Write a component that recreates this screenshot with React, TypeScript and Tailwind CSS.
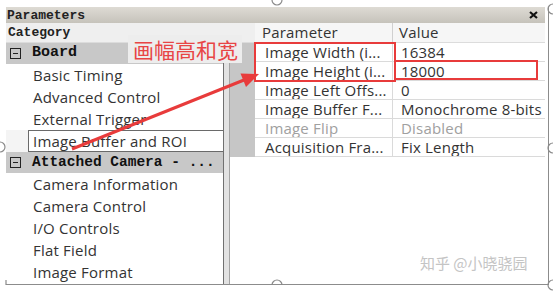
import React from "react";

const treeBoard = ["Basic Timing", "Advanced Control", "External Trigger"];
const treeCamera = ["Camera Information", "Camera Control", "I/O Controls", "Flat Field", "Image Format"];

const params: { name: string; value: string; disabled?: boolean }[] = [
  { name: "Image Width (i...", value: "16384" },
  { name: "Image Height (i...", value: "18000" },
  { name: "Image Left Offs...", value: "0" },
  { name: "Image Buffer F...", value: "Monochrome 8-bits" },
  { name: "Image Flip", value: "Disabled", disabled: true },
  { name: "Acquisition Fra...", value: "Fix Length" },
];

const mono = "font-['Liberation_Mono',monospace] font-bold";
const sans = "font-['Open_Sans',sans-serif] font-medium text-[15px] tracking-[0.2px]";

const Collapse = () => (
  <span className="w-[11px] h-[11px] border border-[#222] flex items-center justify-center">
    <span className="w-[5px] h-[1px] bg-[#222]" />
  </span>
);

const GroupRow = ({ label, size }: { label: string; size: string }) => (
  <div className="h-[21px] bg-[#c8c8c8] flex items-center pl-[4px] gap-[11px] shrink-0">
    <Collapse />
    <span className={`${mono} ${size} text-[#111] whitespace-nowrap`}>{label}</span>
  </div>
);

const TreeItem = ({ label }: { label: string }) => (
  <div className={`${sans} h-[22px] flex items-center pl-[27px] text-[#333] bg-white`}>{label}</div>
);

export default function App() {
  return (
    <div className="relative w-[559px] h-[295px] bg-white overflow-hidden pl-[6px] pt-[7px]">
      <div className="w-[543px] h-[278px] border-r border-b border-[#8c8c8c] pr-[3px] flex flex-col">
        {/* title bar */}
        <div className="h-[16px] bg-linear-to-b from-[#dedbd4] to-[#c6c3bb] flex items-center justify-between pl-[1px] pr-[7px]">
          <span className={`${mono} text-[13px] leading-none text-[#222]`}>Parameters</span>
          <svg width="9" height="8" viewBox="0 0 9 8">
            <path d="M1 1 L8 7 M8 1 L1 7" stroke="#111" strokeWidth="2.2" />
          </svg>
        </div>

        {/* header */}
        <div className="h-[20px] flex bg-[#efefef] border-b border-[#dcdcdc]">
          <div className={`${mono} w-[249px] pl-[2px] flex items-center text-[13px] text-[#222]`}>Category</div>
          <div className={`${sans} w-[138px] pl-[7px] flex items-center text-[#333] bg-[#f6f6f6] border-r border-[#d0d0d0]`}>Parameter</div>
          <div className={`${sans} flex-1 pl-[6px] flex items-center text-[#333] bg-[#f6f6f6]`}>Value</div>
        </div>

        {/* body */}
        <div className="flex-1 flex">
          <div className="w-[218px] flex flex-col border-r border-[#707070]">
            <GroupRow label="Board" size="text-[15px]" />
            {treeBoard.map((t) => (
              <TreeItem key={t} label={t} />
            ))}
            <div className="h-[22px] bg-[#f4f4f4] pl-[22px]">
              <div className={`${sans} h-full border border-r-0 border-[#6a6a6a] bg-white pl-[4px] flex items-center text-[#333] whitespace-nowrap`}>
                Image Buffer and ROI
              </div>
            </div>
            <GroupRow label="Attached Camera - ..." size="text-[14.5px]" />
            {treeCamera.map((t) => (
              <TreeItem key={t} label={t} />
            ))}
          </div>

          <div className="w-[6px] bg-[#e2e2e2] border-r border-[#a4a4a4]" />

          <div className="flex-1 flex flex-col">
            {params.map((p) => (
              <div key={p.name} className="h-[19px] flex">
                <div className="w-[25px] bg-[#c6c6c6]" />
                <div
                  className={`${sans} w-[138px] pl-[10px] flex items-center whitespace-nowrap overflow-hidden border-r border-b border-[#dadada] ${p.disabled ? "text-[#a0a0a0]" : "text-[#333]"}`}
                >
                  {p.name}
                </div>
                <div
                  className={`${sans} flex-1 pl-[8px] flex items-center whitespace-nowrap overflow-hidden border-b border-[#dadada] ${p.disabled ? "text-[#a0a0a0]" : "text-[#333]"}`}
                >
                  {p.value}
                </div>
              </div>
            ))}
            <div className="flex-1 bg-white" />
          </div>
        </div>
      </div>

      {/* annotation label */}
      <div className="absolute left-[128px] top-[35px] w-[114px] h-[28px] bg-[#ededed] flex items-center pl-[5px]">
        <span className="font-['Noto_Sans_CJK_SC',sans-serif] text-[21px] leading-none text-[#e84545] whitespace-nowrap">
          画幅高和宽
        </span>
      </div>

      {/* red boxes */}
      <div className="absolute left-[254px] top-[42px] w-[142px] h-[40px] border-2 border-[#e83b3b]" />
      <div className="absolute left-[394px] top-[60px] w-[144px] h-[20px] border-2 border-[#e83b3b]" />

      {/* arrow and selection handles */}
      <svg className="absolute left-0 top-0 pointer-events-none" width="559" height="295" viewBox="0 0 559 295">
        <line x1="72" y1="149" x2="244" y2="80" stroke="#e83b3b" strokeWidth="3" />
        <polygon points="259,74 246,87 240.5,73.5" fill="#e83b3b" />
        <g fill="none" stroke="#8a8a8a" strokeWidth="1.2">
          <path d="M272 0 A5 5 0 0 0 282 0" />
          <path d="M553 4 A5 5 0 0 0 553 14" />
          <path d="M553 143 A5 5 0 0 0 553 153" />
          <path d="M553 280 A5 5 0 0 0 553 290" />
          <path d="M272 285 A5 5 0 0 1 282 285" />
          <path d="M0 142 A5 5 0 0 1 0 152" />
          <path d="M6 280 L6 285" />
        </g>
      </svg>

      {/* watermark */}
      <div className="absolute left-[420px] top-[255px] font-['Noto_Sans_CJK_SC',sans-serif] text-[15px] leading-none text-[#c4c4c4] whitespace-nowrap">
        知乎 @小晓骁园
      </div>
    </div>
  );
}
